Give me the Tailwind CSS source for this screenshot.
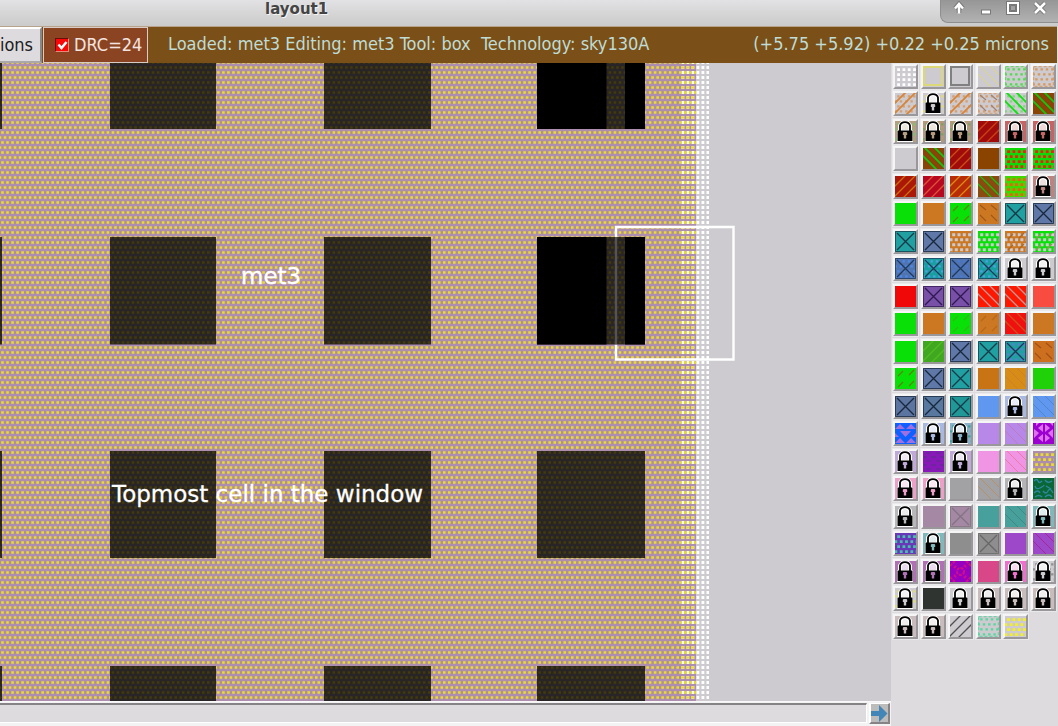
<!DOCTYPE html>
<html lang="en">
<head>
<meta charset="utf-8">
<title>layout1</title>
<script src="https://cdn.jsdelivr.net/npm/@tailwindcss/browser@4"></script>
</head>
<body class="flex h-screen flex-col overflow-hidden bg-[#dddbde] font-['DejaVu_Sans_Condensed','DejaVu_Sans',sans-serif] text-[#1c2022]">
<header class="relative flex h-[26px] shrink-0 items-start bg-linear-to-b from-[#e2e1e3] to-[#cbcbcb]">
  <h1 class="ml-[265px] flex-1 text-[15px] leading-[18px] font-bold text-[#444] [font-family:'DejaVu_Sans',sans-serif] [text-shadow:1px_1px_0_#f4f4f4]">layout1</h1>
  <div class="flex h-[23px] w-[118px] items-center rounded-bl-lg border-b border-l border-[#8e8e8e] bg-linear-to-b from-[#969696] to-[#b2b2b2] pb-[7px] pl-[4px]">
    <button aria-label="Shade" class="grid w-[27px] place-items-center"><svg width="14" height="14" viewBox="0 0 14 14"><path d="M7 12V4M3 7.500 7 3l4 4.500" fill="none" stroke="#777" stroke-width="4.500"/><path d="M7 12.500V4M3 7.500 7 3l4 4.500" fill="none" stroke="#fff" stroke-width="2.500"/></svg></button>
    <button aria-label="Minimize" class="grid w-[27px] place-items-center"><svg width="14" height="14" viewBox="0 0 14 14"><path d="M2 8.500h10v5H2z" fill="#777"/><path d="M3 9.500h8v3H3z" fill="#fff"/></svg></button>
    <button aria-label="Maximize" class="grid w-[27px] place-items-center"><svg width="14" height="14" viewBox="0 0 14 14"><path d="M2 2h10v10H2z" fill="none" stroke="#777" stroke-width="4"/><path d="M2 2h10v10H2z" fill="none" stroke="#fff" stroke-width="2"/><path d="M4.500 4.500h5v5h-5z" fill="none" stroke="#777"/></svg></button>
    <button aria-label="Close" class="grid w-[27px] place-items-center"><svg width="14" height="14" viewBox="0 0 14 14"><path d="m2 2 10 10M12 2 2 12" stroke="#777" stroke-width="4.500"/><path d="m2 2 10 10M12 2 2 12" stroke="#fff" stroke-width="2.500"/></svg></button>
  </div>
</header>

<nav class="mr-px flex h-[37px] shrink-0 items-stretch border-t border-[#b8a48c] bg-[#7a5018] text-lg leading-[34px] text-[#bfdcd6]">
  <button class="flex w-[42px] shrink-0 items-center justify-end border-t-2 border-r-2 border-b-2 border-t-white border-r-[#8a888a] border-b-[#aaa8aa] bg-[#dddbde] pr-[7px] text-[#1c2022]">ions</button>
  <label class="ml-px flex w-[105px] shrink-0 items-center gap-[5px] border border-[#d8ccc8] bg-[#8b4422] pl-[11px] whitespace-nowrap text-[#f4e4e0]">
    <input type="checkbox" checked class="peer sr-only">
    <span class="grid size-[14px] shrink-0 place-items-center border border-t-[#6a1008] border-r-[#e88878] border-b-[#e88878] border-l-[#6a1008] bg-[#f80808]"><svg width="11" height="10" viewBox="0 0 11 10"><path d="m1.500 4.500 3 3.500L9.500 2" fill="none" stroke="#fff" stroke-width="2.500"/></svg></span>
    DRC=24
  </label>
  <p class="ml-5 flex-1 whitespace-pre">Loaded: met3 Editing: met3 Tool: box  Technology: sky130A</p>
  <p class="mr-2 whitespace-nowrap">(+5.75 +5.92) +0.22 +0.25 microns</p>
</nav>

<div class="flex min-h-0 flex-1">
  <main class="flex min-w-0 flex-1 flex-col">
    <div class="relative min-h-0 flex-1 overflow-hidden bg-[#cdcbcf]">
      <svg id="layout" class="absolute inset-0 h-full w-full" viewBox="0 63 891 638" preserveAspectRatio="xMinYMin slice" role="img" aria-label="Layout canvas">
        <defs>
          <clipPath id="inCuts"><path class="cuts"/></clipPath>
          <g id="metal" fill="none" stroke-width="2.600" stroke-dasharray="2.600 2.420"></g>
        </defs>
        <path d="M0 63h696v638H0z" fill="#ae8eae"/>
        <path id="contact" stroke="#fff" stroke-width="2.800" stroke-dasharray="2.800 2.200"/>
        <use href="#metal" stroke="#ecdc28"/>
        <path class="cuts" fill="#292527"/>
        <g clip-path="url(#inCuts)"><use href="#metal" stroke="#423a0a"/></g>
        <path d="M537 63h69.500v66H537zM625 63h20v66h-20zM537 237h69.500v107.500H537zM625 237h20v107.500h-20z" fill="#000"/>
        <path d="M616 237V227H733.500V359.500H616V344.500" fill="none" stroke="#fff" stroke-width="2.400"/>
        <path d="M616 237v107.500" stroke="#555356" stroke-width="2.400"/>
        <g fill="#fff" stroke="#fff" stroke-width=".3" font-family="DejaVu Sans, sans-serif" font-size="23"><text x="241" y="284">met3</text><text x="112" y="502">Topmost cell in the window</text></g>
      </svg>
    </div>
    <div class="flex h-[25px] shrink-0 items-start border-t border-[#f8f8f8] bg-[#f4f3f4] pt-px">
      <div role="scrollbar" aria-controls="layout" aria-valuenow="0" aria-orientation="horizontal" class="h-5 flex-1 border-t-2 border-r border-b border-t-[#858385] border-r-white border-b-white bg-[#dddbde]"></div>
      <button aria-label="Scroll right" class="mr-px ml-[2px] grid size-[21px] place-items-center border-t border-r-2 border-b-2 border-l-2 border-t-white border-r-[#858385] border-b-[#858385] border-l-white bg-[#bcbcba]"><svg width="17" height="17" viewBox="0 0 17 17"><path d="M0 6h8V0l8.500 8.500L8 17v-6H0z" fill="#4286b8"/></svg></button>
    </div>
  </main>
  <aside class="w-[167px] shrink-0 pl-[2px]">
    <div id="palette" aria-label="Layers" class="grid h-[578px] grid-cols-6 grid-rows-[repeat(21,minmax(0,1fr))] pt-px"></div>
  </aside>
</div>

<template id="cell"><button class="grid size-[25px] place-items-center border-t-2 border-r-2 border-b-2 border-l-2 border-t-[#f6f5f6] border-r-[#99979a] border-b-[#99979a] border-l-[#f6f5f6] bg-[#cdcbcf] outline outline-[#e9e8ea]"></button></template>

<script>
const G = '#cdcbcf';
const box = (c) => `<path d="M0 0h21v21H0z" fill="${c}"/>`;
const line = (d, c, w) => `<path d="${d}" fill="none" stroke="${c}" stroke-width="${w}"/>`;
const UP = 'M-1 11 11-1M-1 21 21-1M8 22 22 8';
const DOWN = 'M11-1 22 10M1-1 22 20M-1 7 14 22';
function dotted(c, stagger = true, s = 2.4) {
  let d = '';
  for (let r = 0; r < 4; r++) for (let k = -1; k < 4; k++) d += `M${k * 5.3 + 2.2 + (stagger && r % 2 ? 2.6 : 0)} ${r * 5 + 2.2}h${s}v${s}h${-s}z`;
  return `<path d="${d}" fill="${c}"/>`;
}
const dash = (c) => `<path d="M.7.7h19.600v19.600H.7z" fill="none" stroke="${c}" stroke-dasharray="3 2"/>`;
const cross = (c) => `<g opacity=".75">${line('M.5.5h20v20H.5z', c, 1)}</g>` + line('M2 2 19 19M19 2 2 19', c, 1.3);
const UPDASH = 'M3 8 8 3M14 7l5-5M3 19l5-5M14 18l5-5';
const DOWNDASH = 'M2 2l6 5M13 2l6 5M2 12l6 6M13 12l6 6';
const draw = {
  solid: (c) => box(c),
  dots: (b, c) => box(b) + dotted(c, true, 2.8),
  grid: (b, c) => box(b) + dotted(c, false, 2.8),
  edged: (b, c) => box(b) + dotted(c) + dash(c),
  frame: (c) => box(G) + line('M1 1h18v18H1z', c, 2),
  up: (b, c, w = 1.3) => box(b) + line(UP, c, w),
  down: (b, c, w = 1.3) => box(b) + line(DOWN, c, w),
  upDots: (b, c) => box(b) + line('M-1 11 11-1M-1 21 21-1M11 22 22 11', c, 1.8) + dotted(c).replace('<path', '<path opacity=".6"'),
  downDots: (b, c) => box(b) + line(DOWN, c, 1.8) + dotted(c).replace('<path', '<path opacity=".4"'),
  upDash: (b, c) => box(b) + line(UPDASH, c, 1.2),
  downDash: (b, c) => box(b) + line(DOWNDASH, c, 1.2),
  dotDash: (b, d, c) => box(b) + dotted(d) + dash(d) + line(DOWNDASH, c, 1.2),
  holes: (b) => box(b) + dotted(G, true, 3),
  holesDash: (b, c) => box(b) + dotted(G, true, 3) + line(UPDASH, c, 1.2),
  x: (b, c = '#183848') => box(b) + cross(c),
  xDots: (b, d, c = '#203858') => box(b) + dotted(d) + cross(c),
  lock: (c, e) => box(c) + (e ? dotted(e) : '') +
    '<path d="M2 21V9h1V4l3-4h8l3 4v5h1v12z" fill="#fff"/>' +
    `<path d="M7 9V5l2-2h2l2 2v4z" fill="${c}" opacity=".25"/>` +
    line('M5 10V4.500Q6 1.200 10 1.200T15 4.500V10', '#000', 1.8) +
    `<path d="M2.500 9.500h15v10.500h-15z"/><path d="M8.500 11h3l.7.700v2.300h-1v3.500h-2.400v-3.500h-1v-2.300z" fill="${c}"/>`,
  zig: (b, c) => box(b) + `<path d="M0 6 5 1l5 5zM11 6l5-5 5 5zM5 8h11l-5.500 6zM0 10l4 4H0zM21 10l-4 4h4zM0 20l5-5 5 5zM11 20l5-5 5 5z" fill="${c}"/>`,
  gems: (b, c) => box(b) + `<path d="M10 1v8L5 5zM12 1v8l5-4zM10 11v8l-5-4zM12 11v8l5-4zM1 6l5 4-5 5zM20 6l-5 4 5 5zM3 0h3L3 3zM17 0h3v3z" fill="${c}"/>`,
  rings: (b, c) => box(b) + `<g fill="none" stroke="${c}" stroke-width="2" stroke-dasharray="3 1"><circle cx="10.500" cy="10.500" r="3.500"/><path d="M0 5 5 0M16 0l5 5M0 16l5 5M21 16l-5 5M4 7l3-3M14 4l3 3M4 14l3 3M14 17l3-3"/></g>`,
  dashes: (b, c) => box(b) + line('M3 2h5M13 2h5M0 6h4M8 6h5M17 6h4M3 10h5M13 10h5M0 14h4M8 14h5M17 14h4M3 18h5M13 18h5', c, 1.6),
  squiggle: (b, c) => box(b) + line('M1 3q3-3 4 0t4 0M12 2q3 4 7 1M2 8q1 4 5 2t4-3M13 8l5 3M1 15q4-4 6 0M10 13q3 4 5 0t5 2M2 19q4-3 7 0M12 19q4-4 7 0', c, 1.3),
};
const g = '#08e008', o = '#cc7722', t = '#20a0a0', b = '#6078a8', bd = '#18283c';
const layers = [
  ['grid', G, '#fff'], ['frame', '#dcd878'], ['frame', '#808080'], ['down', G, '#dcd878', 1], ['edged', G, '#50dc50'], ['edged', G, '#d89860'],
  ['upDots', G, '#d88438'], ['lock', G, '#e0dc70'], ['upDots', G, '#d88438'], ['dotDash', G, '#d8a070', '#a08070'], ['downDots', G, '#10e010'], ['down', '#8b4408', '#10c810', 1.8],
  ['lock', '#b4a080', '#80c070'], ['lock', '#b4987c', '#80a060'], ['lock', '#b4987c', '#80a060'], ['up', '#a00c0c', '#c84414'], ['lock', '#c46464'], ['lock', '#c46464'],
  ['solid', G], ['down', '#8b4408', '#10c810', 1.8], ['up', '#a00c0c', '#c85014'], ['solid', '#8b4400'], ['dots', '#10d808', '#f02010'], ['dots', '#10d808', '#f02010'],
  ['up', '#ac1808', '#cc7010'], ['up', '#b80820', '#dc5438'], ['up', '#b82c08', '#dc8c10'], ['down', '#8b4a10', '#18c010'], ['dots', '#40d800', '#f06010'], ['lock', '#bc8480'],
  ['solid', g], ['solid', o], ['upDash', g, '#608010'], ['downDash', o, '#a05818'], ['x', t], ['x', b, bd],
  ['x', t], ['x', b, bd], ['holes', o], ['holes', g], ['holesDash', o, '#b06820'], ['holesDash', g, '#a09060'],
  ['xDots', '#5074b0', '#4c88e8'], ['xDots', '#18a0a0', '#50a0e0'], ['xDots', '#5074b0', '#4c78d0'], ['xDots', '#18a0a0', '#50a0e0'], ['lock', G], ['lock', G],
  ['solid', '#f00808'], ['x', '#7850a8', '#301850'], ['x', '#7850a8', '#301850'], ['down', '#ff1800', '#c09898'], ['down', '#ff1800', '#c09898'], ['solid', '#f84c40'],
  ['solid', g], ['solid', o], ['upDash', g, '#30b818'], ['upDash', o, '#b86818'], ['down', '#f01010', '#d05018'], ['solid', o],
  ['solid', g], ['up', '#40a820', '#50bc20'], ['x', b, bd], ['x', t], ['xDots', t, '#5880d0'], ['downDash', '#cc7020', '#a05018'],
  ['upDash', g, '#608010'], ['x', b, bd], ['x', t], ['solid', '#c87414'], ['down', '#d88c18', '#cc8028', 1], ['solid', '#20d008'],
  ['x', '#5c74a0', bd], ['x', '#5878a0', bd], ['x', '#209898'], ['solid', '#6098f0'], ['lock', '#a8b8e0'], ['down', '#6098f0', '#5484cc', 1],
  ['zig', '#1060ff', '#a070e0'], ['lock', '#a8b8e0'], ['lock', '#88b0c8', '#40a0a0'], ['solid', '#b888e8'], ['down', '#b888e8', '#c078c0', 1], ['gems', '#9c00d0', '#e070f0'],
  ['lock', '#c0a8d8'], ['dashes', '#8818b8', '#682898'], ['lock', '#c0a8d8'], ['solid', '#f094e4'], ['down', '#f094e4', '#f078a8', 1], ['dots', '#ac8eac', '#ecdc28'],
  ['lock', '#eca0c8'], ['lock', '#eca0c8'], ['solid', '#a2a2a5'], ['down', '#a2a2a5', '#b89068', 1], ['lock', '#b4b4b6'], ['squiggle', '#0a6838', '#3088a0'],
  ['lock', '#b8b8ba'], ['solid', '#a488a4'], ['x', '#a488a4', '#807480'], ['solid', '#48a09c'], ['down', '#48a09c', '#408880', 1], ['lock', '#80b8bc'],
  ['dots', '#6838b8', '#48c0b0'], ['lock', '#80b8bc'], ['solid', '#8e8e8e'], ['x', '#8e8e8e', '#686868'], ['solid', '#9c48c8'], ['down', '#9c48c8', '#a42898', 1],
  ['lock', '#b070b4'], ['lock', '#b070b4'], ['rings', '#9800c0', '#d01088'], ['solid', '#d84888'], ['lock', '#ec70cc'], ['lock', '#cdcbcf', '#909090'],
  ['lock', G, '#e0dc70'], ['solid', '#303430'], ['lock', G], ['lock', '#c8bcbc'], ['lock', '#c8bcbc'], ['lock', '#c8bcbc'],
  ['lock', '#c8bcbc'], ['lock', '#c8bcbc'], ['up', G, '#505050'], ['edged', G, '#58d8a0'], ['dots', G, '#f4f020'],
];
const palette = document.getElementById('palette');
const cell = document.getElementById('cell').content.firstElementChild;
layers.forEach(([kind, ...colors], i) => {
  const button = cell.cloneNode(true);
  button.setAttribute('aria-label', `Layer ${i + 1}`);
  button.innerHTML = `<svg width="21" height="21" viewBox="0 0 21 21">${draw[kind](...colors)}</svg>`;
  palette.append(button);
});

let cuts = '';
for (const [y, h] of [[63, 66], [237, 107.5], [451, 107], [666, 35]])
  for (const [x, w] of [[0, 2], [110, 106], [324, 107], [537, 108]]) cuts += `M${x} ${y}h${w}v${h}h${-w}z`;
document.querySelectorAll('.cuts').forEach((p) => p.setAttribute('d', cuts));

let rows = '', contact = '';
for (let k = 0; k < 128; k++) {
  const y = 62.5 + k * 5;
  rows += `<path d="M${k % 2 ? -1.3 : 1.2} ${y}H696"/>`;
  contact += `M681.5 ${y}H709`;
}
document.getElementById('metal').innerHTML = rows;
document.getElementById('contact').setAttribute('d', contact);
</script>
</body>
</html>
